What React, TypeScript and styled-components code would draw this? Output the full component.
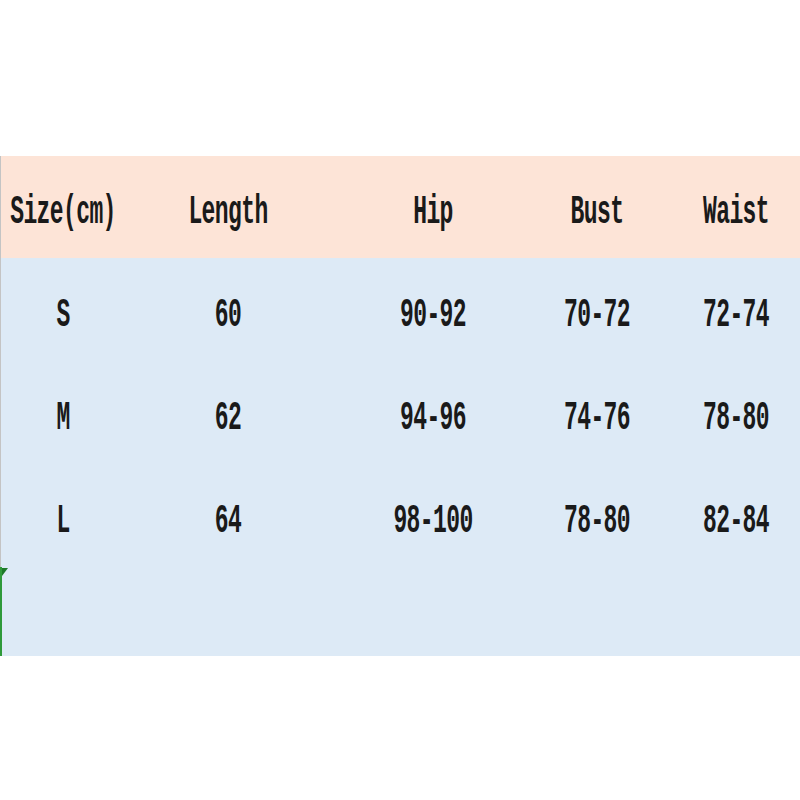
import React from "react";
import styled, { createGlobalStyle } from "styled-components";

const Global = createGlobalStyle`
  html, body { margin: 0; padding: 0; background: #ffffff; }
  body { font-family: "Liberation Mono", "DejaVu Sans Mono", monospace; }
`;

const Page = styled.div`
  width: 800px;
  height: 800px;
  padding-top: 156px;
  box-sizing: border-box;
  background: #ffffff;
`;

const Table = styled.div`
  display: grid;
  grid-template-rows: 102px 103px 103px 103px 89px;
  border-left: 1px solid #c4c4c4;
  box-sizing: border-box;
  width: 800px;
`;

const Row = styled.div<{ $head?: boolean }>`
  display: grid;
  grid-template-columns: 124px 206px 204px 124px 142px;
  align-items: center;
  background: ${(p) => (p.$head ? "#fde4d7" : "#ddeaf6")};
`;

const EmptyRow = styled(Row)`
  position: relative;
  margin-left: -1px;
  border-left: 2px solid #2f9a3a;
  &::before {
    content: "";
    position: absolute;
    left: 0;
    top: 1px;
    width: 0;
    height: 0;
    border-top: 8px solid #1e7a2a;
    border-right: 6px solid transparent;
  }
`;

const Cell = styled.div<{ $shift?: number }>`
  text-align: center;
  padding-left: ${(p) => p.$shift ?? 0}px;
  padding-top: 13px;
`;

const Label = styled.span`
  display: inline-block;
  font-family: "Liberation Mono", "DejaVu Sans Mono", monospace;
  font-weight: bold;
  font-size: 23px;
  line-height: 1;
  color: #1a1a1a;
  transform: scaleY(1.75);
  letter-spacing: -0.6px;
`;

const header = ["Size(cm)", "Length", "Hip", "Bust", "Waist"];
const rows = [
  ["S", "60", "90-92", "70-72", "72-74"],
  ["M", "62", "94-96", "74-76", "78-80"],
  ["L", "64", "98-100", "78-80", "82-84"],
];
const shifts = [0, 0, 0, 0, 12];

export default function App() {
  return (
    <>
      <Global />
      <Page>
        <Table>
          <Row $head>
            {header.map((h, i) => (
              <Cell key={h} $shift={shifts[i]}>
                <Label>{h}</Label>
              </Cell>
            ))}
          </Row>
          {rows.map((r) => (
            <Row key={r[0]}>
              {r.map((v, i) => (
                <Cell key={i} $shift={shifts[i]}>
                  <Label>{v}</Label>
                </Cell>
              ))}
            </Row>
          ))}
          <EmptyRow />
        </Table>
      </Page>
    </>
  );
}
